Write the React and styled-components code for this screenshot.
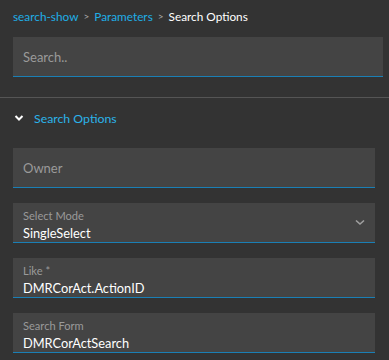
import styled, { createGlobalStyle } from "styled-components";

const GlobalStyle = createGlobalStyle`
  html, body {
    margin: 0;
    padding: 0;
    background: #333333;
  }
  body {
    font-family: Lato, "Open Sans", sans-serif;
  }
`;

const Page = styled.div`
  width: 389px;
  height: 360px;
  overflow: hidden;
  background: #333333;
  box-sizing: border-box;
`;

const Top = styled.div`
  padding: 7px 6px 0 13px;
`;

const Crumbs = styled.div`
  display: flex;
  align-items: center;
  gap: 5px;
  height: 18px;
  font-size: 11.8px;
  color: #ffffff;
`;

const CrumbLink = styled.span`
  color: #1faee6;
`;

const Sep = styled.span`
  color: #aaaaaa;
  font-size: 10px;
`;

const SearchBox = styled.div`
  margin-top: 12px;
  height: 39px;
  background: #444444;
  border-bottom: 1px solid #1a7fb5;
  display: flex;
  align-items: center;
  padding: 0 10px;
  font-size: 13px;
  color: #9a9a9a;
`;

const Divider = styled.div`
  margin-top: 20px;
  height: 1px;
  background: #555555;
`;

const Section = styled.div`
  padding: 0 14px 0 13px;
`;

const SectionHead = styled.div`
  display: flex;
  align-items: center;
  gap: 10px;
  height: 40px;
  font-size: 12.3px;
  color: #2bb3ea;
  padding-left: 1px;
`;

const Fields = styled.div`
  margin-top: 10px;
  display: flex;
  flex-direction: column;
  gap: 15px;
`;

const Field = styled.div`
  position: relative;
  height: 39px;
  background: #444444;
  border-bottom: 1px solid #1a7fb5;
  padding: 0 10px;
  display: flex;
  flex-direction: column;
  justify-content: ${(p) => (p.$placeholder ? "center" : "flex-start")};
`;

const Placeholder = styled.div`
  font-size: 13px;
  color: #9a9a9a;
`;

const Label = styled.div`
  margin-top: 6px;
  font-size: 11.1px;
  line-height: 14px;
  color: #9a9a9a;
`;

const Value = styled.div`
  margin-top: 2px;
  font-size: 12.8px;
  line-height: 17px;
  color: #ffffff;
`;

const Caret = styled.svg`
  position: absolute;
  right: 10px;
  top: 16px;
`;

const Chevron = () => (
  <svg width="10" height="8" viewBox="0 0 10 8">
    <path d="M1.5 2 L5 5.5 L8.5 2" fill="none" stroke="#ffffff" strokeWidth="2" />
  </svg>
);

export default function App() {
  return (
    <Page>
      <GlobalStyle />
      <Top>
        <Crumbs>
          <CrumbLink>search-show</CrumbLink>
          <Sep>&gt;</Sep>
          <CrumbLink>Parameters</CrumbLink>
          <Sep>&gt;</Sep>
          <span>Search Options</span>
        </Crumbs>
        <SearchBox>Search..</SearchBox>
      </Top>
      <Divider />
      <Section>
        <SectionHead>
          <Chevron />
          Search Options
        </SectionHead>
        <Fields>
          <Field $placeholder>
            <Placeholder>Owner</Placeholder>
          </Field>
          <Field>
            <Label>Select Mode</Label>
            <Value>SingleSelect</Value>
            <Caret width="10" height="7" viewBox="0 0 10 7">
              <path d="M1 1.5 L5 5 L9 1.5" fill="none" stroke="#a0a0a0" strokeWidth="1.6" />
            </Caret>
          </Field>
          <Field>
            <Label>Like *</Label>
            <Value>DMRCorAct.ActionID</Value>
          </Field>
          <Field>
            <Label>Search Form</Label>
            <Value>DMRCorActSearch</Value>
          </Field>
        </Fields>
      </Section>
    </Page>
  );
}
